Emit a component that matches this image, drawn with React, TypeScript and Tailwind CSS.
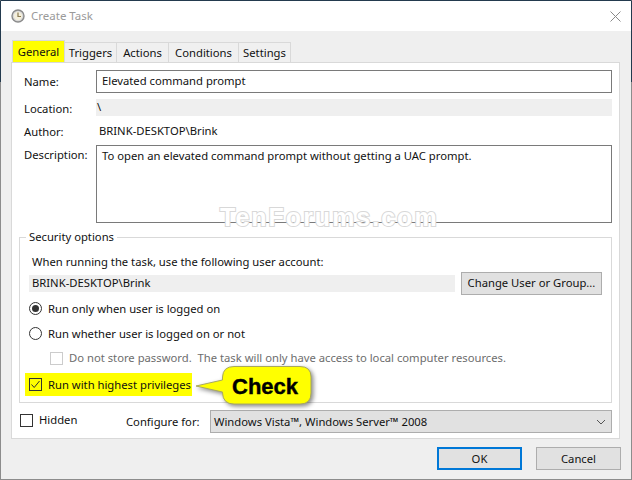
const font = "font-['Noto_Sans','Open_Sans',sans-serif]";

function Radio({ checked, label }: { checked?: boolean; label: string }) {
  return (
    <div className="flex h-[25px] items-center gap-[5px] pl-[9px]">
      <span className="flex h-[13px] w-[13px] items-center justify-center rounded-full border border-[#333] bg-white">
        {checked && <span className="h-[7px] w-[7px] rounded-full bg-[#333]" />}
      </span>
      <span className="ml-[1px]">{label}</span>
    </div>
  );
}

function Tab({ label, width }: { label: string; width: string }) {
  return (
    <div className={`flex h-[20px] items-center justify-center border border-b-0 border-l-0 border-[#d9d9d9] bg-[#f0f0f0] ${width}`}>
      {label}
    </div>
  );
}

function Field({ label, children, className, labelClass }: { label: string; children: React.ReactNode; className?: string; labelClass?: string }) {
  return (
    <div className={`flex ${className ?? ""}`}>
      <div className={`w-[84px] shrink-0 pl-[12px] ${labelClass ?? "pt-[1px]"}`}>{label}</div>
      <div className="min-w-0 flex-1">{children}</div>
    </div>
  );
}

export default function App() {
  return (
    <div className={`${font} relative flex h-[480px] w-[632px] flex-col whitespace-nowrap border border-[#8c8c8c] border-t-[#233a4e] bg-[#efefef] text-[11.25px] leading-[16px] text-[#111]`}>
      {/* window behind peeks through on the edges */}
      <div className="absolute left-[-1px] top-0 h-[81px] w-[1px] bg-[#233a4e]" />
      <div className="absolute right-[-1px] top-0 h-[81px] w-[1px] bg-[#233a4e]" />

      {/* title bar */}
      <div className="flex h-[30px] shrink-0 items-center bg-white pl-[10px] pr-[10px]">
        <svg width="14" height="14" viewBox="0 0 14 14">
          <circle cx="7" cy="7" r="6" fill="#d8d8d8" stroke="#8a8a8a" strokeWidth="1.4" />
          <circle cx="7" cy="7" r="4.2" fill="#f4efdc" />
          <path d="M7 3.5V7.5H10" fill="none" stroke="#8a7a50" strokeWidth="1.2" />
        </svg>
        <span className="ml-[6px] flex-1 text-[11.5px] text-[#9a9a9a]">Create Task</span>
        <svg width="11" height="11" viewBox="0 0 11 11">
          <path d="M0.5 0.5L10.5 10.5M10.5 0.5L0.5 10.5" stroke="#8a8a8a" strokeWidth="1" />
        </svg>
      </div>

      {/* tabs */}
      <div className="mt-[9px] flex h-[22px] shrink-0 items-end pl-[11px]">
        <div className="flex h-[22px] w-[53px] items-center justify-center border border-b-0 border-[#d9d9d9] bg-[#ffff00]">General</div>
        <Tab label="Triggers" width="w-[52px]" />
        <Tab label="Actions" width="w-[52px]" />
        <Tab label="Conditions" width="w-[70px]" />
        <Tab label="Settings" width="w-[52px]" />
      </div>

      {/* panel */}
      <div className="ml-[10px] mr-[11px] flex h-[377px] shrink-0 flex-col border border-[#d9d9d9] bg-white pr-[7px] pt-[7px]">
        <Field label="Name:" className="h-[22px] items-center">
          <div className="flex h-[23px] items-center border border-[#7a7a7a] px-[5px]">Elevated command prompt</div>
        </Field>
        <Field label="Location:" className="mt-[7px] h-[17px] items-center" labelClass="pt-[2px]">
          <div className="h-[17px] bg-[#efefef] pl-[1px]">\</div>
        </Field>
        <Field label="Author:" className="mt-[6px] h-[17px] items-center" labelClass="pt-[2px]">
          <div className="pl-[3px]">BRINK-DESKTOP\Brink</div>
        </Field>
        <Field label="Description:" className="mt-[6px] h-[78px] items-start" labelClass="pt-[2px]">
          <div className="h-[78px] border border-[#7a7a7a] px-[5px] pt-[2px]">To open an elevated command prompt without getting a UAC prompt.</div>
        </Field>

        {/* security options */}
        <div className="relative ml-[7px] mt-[14px] h-[166px] border border-[#d9d9d9] pt-[16px]">
          <span className="absolute left-[6px] top-[-9px] bg-white px-[3px]">Security options</span>
          <div className="pl-[12px]">When running the task, use the following user account:</div>
          <div className="mt-[2px] flex h-[22px] items-center pr-[9px]">
            <div className="ml-[9px] flex h-[17px] flex-1 items-center bg-[#efefef] pl-[3px]">BRINK-DESKTOP\Brink</div>
            <div className="ml-[6px] flex h-[23px] w-[141px] items-center justify-center border border-[#adadad] bg-[#e1e1e1]">Change User or Group...</div>
          </div>
          <div className="mt-[2px]">
            <Radio checked label="Run only when user is logged on" />
            <Radio label="Run whether user is logged on or not" />
          </div>
          <div className="flex h-[24px] items-center gap-[6px] pl-[30px] text-[#6d6d6d]">
            <span className="h-[13px] w-[13px] border border-[#ccc] bg-white" />
            <span className="whitespace-pre">Do not store password.  The task will only have access to local computer resources.</span>
          </div>
          <div className="ml-[5px] mt-[3px] flex h-[23px] w-[167px] items-center gap-[5px] bg-[#ffff00] pl-[4px]">
            <span className="flex h-[13px] w-[13px] items-center justify-center border border-[#333]">
              <svg width="11" height="11" viewBox="0 0 11 11">
                <path d="M1.5 5.5L4.2 8.5L9.5 2" fill="none" stroke="#333" strokeWidth="1" />
              </svg>
            </span>
            <span className="ml-[1px]">Run with highest privileges</span>
          </div>
        </div>

        {/* hidden + configure */}
        <div className="mt-[7px] flex h-[23px] items-center">
          <span className="ml-[8px] mt-[-3px] h-[13px] w-[13px] border border-[#333]" />
          <span className="ml-[6px] mt-[-3px] w-[87px]">Hidden</span>
          <span className="w-[84px]">Configure for:</span>
          <div className="flex h-[23px] flex-1 items-center justify-between border border-[#adadad] bg-[#e1e1e1] pl-[3px] pr-[5px]">
            <span>Windows Vista™, Windows Server™ 2008</span>
            <svg width="10" height="6" viewBox="0 0 10 6">
              <path d="M1 1L5 5L9 1" fill="none" stroke="#555" strokeWidth="1" />
            </svg>
          </div>
        </div>
      </div>

      {/* footer buttons */}
      <div className="mt-[8px] flex justify-end gap-[14px] pr-[10px]">
        <div className="flex h-[23px] w-[85px] items-center justify-center border-2 border-[#0078d7] bg-[#e1e1e1]">OK</div>
        <div className="flex h-[23px] w-[85px] items-center justify-center border border-[#adadad] bg-[#e1e1e1]">Cancel</div>
      </div>

      {/* watermark */}
      <span className="absolute left-[219px] top-[202px] font-['Liberation_Sans',sans-serif] text-[25px] font-bold leading-[28px] tracking-[2px] text-white [-webkit-text-stroke:2px_#d8d8d8] [paint-order:stroke_fill]">
        TenForums.com
      </span>

      {/* callout */}
      <div className="absolute left-[193px] top-[364px] h-[44px] w-[122px]">
        <svg className="absolute inset-0 drop-shadow-[2px_2px_2px_rgba(0,0,0,0.45)]" width="122" height="44" viewBox="0 0 122 44">
          <path
            d="M40 1.5H106Q117 1.5 117 12V28Q117 39 106 39H40Q29 39 28.5 28V27L2 21L28.5 15V12Q29 1.5 40 1.5Z"
            fill="#ffff00"
            stroke="#a8a860"
            strokeWidth="1"
          />
        </svg>
        <span className="absolute left-[38px] top-[10px] font-['Liberation_Sans',sans-serif] text-[22px] font-bold leading-[24px] text-black [-webkit-text-stroke:0.4px_#000]">Check</span>
      </div>
    </div>
  );
}
